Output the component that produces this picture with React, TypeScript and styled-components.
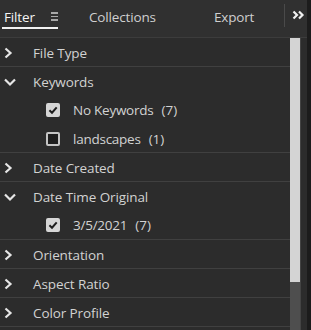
import React from "react";
import styled, { createGlobalStyle } from "styled-components";

type Item = { label: string; count: number; checked: boolean };
type Section = { title: string; open: boolean; items?: Item[] };

const sections: Section[] = [
  { title: "File Type", open: false },
  {
    title: "Keywords",
    open: true,
    items: [
      { label: "No Keywords", count: 7, checked: true },
      { label: "landscapes", count: 1, checked: false },
    ],
  },
  { title: "Date Created", open: false },
  {
    title: "Date Time Original",
    open: true,
    items: [{ label: "3/5/2021", count: 7, checked: true }],
  },
  { title: "Orientation", open: false },
  { title: "Aspect Ratio", open: false },
  { title: "Color Profile", open: false },
];

function Chevron({ open }: { open: boolean }) {
  return (
    <ChevronBox>
      {open ? (
        <svg width="14" height="10" viewBox="0 0 14 10">
          <path d="M2 2.5 L7 7.5 L12 2.5" fill="none" stroke="#e6e6e6" strokeWidth="2.2" />
        </svg>
      ) : (
        <svg width="10" height="12" viewBox="0 0 10 12">
          <path d="M2.5 1.5 L7.5 6 L2.5 10.5" fill="none" stroke="#e6e6e6" strokeWidth="2.2" />
        </svg>
      )}
    </ChevronBox>
  );
}

function Checkbox({ checked }: { checked: boolean }) {
  return (
    <Box checked={checked}>
      {checked && (
        <svg width="10" height="10" viewBox="0 0 10 10">
          <path d="M1.4 5.2 L4 7.7 L8.7 2.3" fill="none" stroke="#1e1e1e" strokeWidth="2" />
        </svg>
      )}
    </Box>
  );
}

function App() {
  return (
    <>
      <GlobalStyle />
      <Panel>
        <Header>
          <ActiveTab>
            <TabLabel active>Filter</TabLabel>
            <MenuIcon>
              <span />
              <span />
              <span />
            </MenuIcon>
          </ActiveTab>
          <TabLabel gap={31}>Collections</TabLabel>
          <TabLabel gap={58}>Export</TabLabel>
          <Divider />
          <More>
            <svg width="13" height="10" viewBox="0 0 13 10">
              <path d="M1.5 1.5 L5 5 L1.5 8.5 M7 1.5 L10.5 5 L7 8.5" fill="none" stroke="#f0f0f0" strokeWidth="2.2" />
            </svg>
          </More>
        </Header>
        <Body>
          <List>
            {sections.map((s) => (
              <Group key={s.title}>
                <HeadRow>
                  <Chevron open={s.open} />
                  <Title>{s.title}</Title>
                </HeadRow>
                {s.open &&
                  s.items?.map((it) => (
                    <ItemRow key={it.label}>
                      <Checkbox checked={it.checked} />
                      <ItemLabel>{it.label}</ItemLabel>
                      <Count>({it.count})</Count>
                    </ItemRow>
                  ))}
              </Group>
            ))}
          </List>
          <Scrollbar>
            <Thumb />
          </Scrollbar>
          <Gutter />
        </Body>
      </Panel>
    </>
  );
}

const GlobalStyle = createGlobalStyle`
  html, body {
    margin: 0;
    padding: 0;
    background: #2c2c2c;
  }
  body {
    font-family: "Open Sans", "Noto Sans", sans-serif;
    -webkit-font-smoothing: antialiased;
  }
`;

const Panel = styled.div`
  width: 311px;
  height: 330px;
  display: flex;
  flex-direction: column;
  background: #2c2c2c;
  overflow: hidden;
  border-right: 4px solid #1c1c1c;
  box-sizing: border-box;
`;

const Header = styled.div`
  height: 38px;
  flex-shrink: 0;
  display: flex;
  align-items: center;
  padding-bottom: 4px;
  background: #303030;
  border-bottom: 1px solid #3c3c3c;
  box-sizing: border-box;
`;

const ActiveTab = styled.div`
  display: flex;
  align-items: center;
  gap: 16px;
  margin-left: 2px;
  padding-left: 2px;
  width: 56px;
  height: 100%;
  box-sizing: border-box;
  position: relative;

  &::after {
    content: "";
    position: absolute;
    left: 0;
    right: 0;
    bottom: 4px;
    height: 2px;
    background: #f2f2f2;
  }
`;

const TabLabel = styled.span<{ active?: boolean; gap?: number }>`
  font-size: 13.5px;
  color: ${({ active }) => (active ? "#f4f4f4" : "#cfcfcf")};
  letter-spacing: -0.15px;
  margin-left: ${({ gap }) => gap ?? 0}px;
`;

const MenuIcon = styled.div`
  display: flex;
  flex-direction: column;
  gap: 2px;
  width: 10px;

  span {
    display: block;
    height: 1.5px;
    background: #a8a8a8;
  }
`;

const Divider = styled.div`
  width: 1px;
  height: 23px;
  background: #4a4a4a;
  margin-left: 30px;
  margin-top: -2px;
`;

const More = styled.div`
  display: flex;
  align-items: center;
  margin-left: 7px;
  margin-top: -4px;
`;

const Body = styled.div`
  flex: 1;
  display: flex;
  min-height: 0;
`;

const List = styled.div`
  flex: 1;
`;

const Group = styled.div`
  border-bottom: 1px solid #404040;
`;

const HeadRow = styled.div`
  height: 28px;
  padding-top: 2px;
  box-sizing: border-box;
  display: flex;
  align-items: center;
`;

const ChevronBox = styled.div`
  width: 33px;
  display: flex;
  justify-content: flex-start;
  padding-left: 3px;
  box-sizing: border-box;
`;

const Title = styled.span`
  font-size: 13.5px;
  color: #d2d2d2;
  letter-spacing: -0.1px;
`;

const ItemRow = styled.div`
  height: 28.5px;
  padding-top: 2px;
  box-sizing: border-box;
  display: flex;
  align-items: center;
  padding-left: 46px;
`;

const Box = styled.div<{ checked: boolean }>`
  width: 14px;
  height: 14px;
  box-sizing: border-box;
  border-radius: 2px;
  display: flex;
  align-items: center;
  justify-content: center;
  background: ${({ checked }) => (checked ? "#d6d6d6" : "#1e1e1e")};
  border: 2px solid ${({ checked }) => (checked ? "#d6d6d6" : "#c4c4c4")};
  margin-right: 13px;
`;

const ItemLabel = styled.span`
  font-size: 13.5px;
  color: #d2d2d2;
  letter-spacing: -0.25px;
`;

const Count = styled.span`
  font-size: 13.5px;
  color: #d2d2d2;
  margin-left: 8px;
`;

const Scrollbar = styled.div`
  width: 11px;
  background: #4e4e4e;
  border-right: 1px solid #444;
  box-sizing: border-box;
`;

const Thumb = styled.div`
  height: 244px;
  background: #d4d4d4;
`;

const Gutter = styled.div`
  width: 6px;
`;

export default App;
